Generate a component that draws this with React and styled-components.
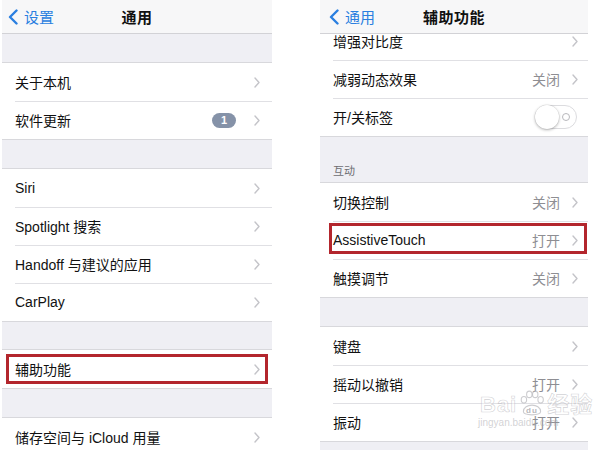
import React from 'react';
import styled, { createGlobalStyle } from 'styled-components';

const GlobalStyle = createGlobalStyle`
  html, body {
    margin: 0;
    padding: 0;
    background: #ffffff;
  }
  body {
    font-family: "Liberation Sans", "Noto Sans CJK SC", sans-serif;
  }
`

const Page = styled.div`
  position: relative;
  width: 600px;
  height: 450px;
  display: flex;
  gap: 48px;
  padding-left: 2px;
  box-sizing: border-box;
  overflow: hidden;
  background: #ffffff;
`

const Phone = styled.div`
  width: ${p => p.$width}px;
  height: 450px;
  display: flex;
  flex-direction: column;
  background: #efeff4;
  overflow: hidden;
`

const NavBar = styled.div`
  position: relative;
  z-index: 2;
  flex: 0 0 34px;
  height: 34px;
  display: flex;
  align-items: center;
  justify-content: center;
  background: #f7f7f8;
  border-bottom: 1px solid #d2d2d6;
  box-sizing: border-box;
`

const BackButton = styled.div`
  position: absolute;
  left: ${p => p.$left}px;
  top: 0;
  bottom: 0;
  display: flex;
  align-items: center;
  gap: 6px;
  color: #2a7fe0;
  font-size: 15px;
`

const Title = styled.div`
  font-size: 15px;
  font-weight: 600;
  color: #111;
  letter-spacing: 0.5px;
`

const Scroll = styled.div`
  flex: 1;
  overflow: hidden;
  display: flex;
  flex-direction: column;
`

const Spacer = styled.div`
  flex: 0 0 ${p => p.$h}px;
`

const SectionHeader = styled.div`
  flex: 0 0 ${p => p.$h}px;
  display: flex;
  align-items: flex-end;
  padding: 0 0 4px 13px;
  box-sizing: border-box;
  font-size: 11px;
  color: #6d6d72;
`

const Group = styled.div`
  flex: 0 0 auto;
  background: #ffffff;
  border-top: 1px solid #d8d8dc;
  border-bottom: 1px solid #d8d8dc;
  margin-top: ${p => p.$offset || 0}px;
`

const Row = styled.div`
  position: relative;
  height: 38px;
  display: flex;
  align-items: center;
  padding: 0 ${p => p.$pr}px 0 ${p => p.$pl}px;
  box-sizing: border-box;
  font-size: 14px;
  color: #111;

  & + &::before {
    content: '';
    position: absolute;
    top: 0;
    left: ${p => p.$pl}px;
    right: 0;
    border-top: 1px solid #e0e0e4;
  }
`

const Label = styled.span`
  flex: 1;
  white-space: nowrap;
`

const Value = styled.span`
  color: #8e8e93;
  font-size: 14px;
  margin-right: 12px;
`

const Badge = styled.span`
  width: 24px;
  height: 15px;
  border-radius: 8px;
  background: #8592a8;
  color: #ffffff;
  font-size: 11px;
  font-weight: 700;
  display: flex;
  align-items: center;
  justify-content: center;
  margin-right: 18px;
`

const Highlight = styled.div`
  position: absolute;
  top: ${p => p.$t}px;
  bottom: ${p => p.$b}px;
  left: ${p => p.$l}px;
  right: ${p => p.$r}px;
  border: 3px solid #b3262d;
  pointer-events: none;
`

const Switch = styled.div`
  position: relative;
  width: 42px;
  height: 24px;
  border-radius: 12px;
  border: 1px solid #dcdcdf;
  background: #ffffff;
  box-sizing: border-box;
  margin-right: 1px;
`

const Knob = styled.div`
  position: absolute;
  left: -1px;
  top: -1px;
  width: 24px;
  height: 24px;
  border-radius: 50%;
  background: #ffffff;
  box-shadow: 0 1px 3px rgba(0, 0, 0, 0.3), 0 0 0 0.5px rgba(0, 0, 0, 0.08);
`

const OffRing = styled.div`
  position: absolute;
  right: 6px;
  top: 7px;
  width: 6px;
  height: 6px;
  border-radius: 50%;
  border: 1.5px solid #b8b8bc;
`

const Watermark = styled.div`
  position: absolute;
  left: 480px;
  top: 386px;
  display: flex;
  flex-direction: column;
  align-items: flex-start;
  pointer-events: none;
`

const MarkLine = styled.div`
  display: flex;
  align-items: flex-end;
  gap: 2px;
  font-size: 22px;
  font-weight: 700;
  letter-spacing: 1px;
  -webkit-text-stroke: 0.6px rgba(170, 170, 175, 0.55);
  color: rgba(255, 255, 255, 0.4);
`

const MarkUrl = styled.div`
  font-size: 10px;
  margin-left: -2px;
  margin-top: -1px;
  color: rgba(165, 165, 170, 0.5);
`

const Chevron = () => (
  <svg width="6" height="11" viewBox="0 0 6 11">
    <path d="M1 1 L5 5.5 L1 10" fill="none" stroke="#c4c4c9" strokeWidth="1.4" strokeLinecap="round" strokeLinejoin="round" />
  </svg>
)

const BackChevron = () => (
  <svg width="10" height="16" viewBox="0 0 10 16">
    <path d="M8.5 1.5 L2 8 L8.5 14.5" fill="none" stroke="#2a7fe0" strokeWidth="2.4" strokeLinecap="round" strokeLinejoin="round" />
  </svg>
)

const Paw = () => (
  <svg width="26" height="28" viewBox="0 0 24 26" style={{ marginBottom: 1 }}>
    <g fill="rgba(255,255,255,0.4)" stroke="rgba(170,170,175,0.6)" strokeWidth="1">
      <ellipse cx="4.5" cy="10" rx="2.5" ry="3" />
      <ellipse cx="9.5" cy="5" rx="2.5" ry="3" />
      <ellipse cx="15" cy="5" rx="2.5" ry="3" />
      <ellipse cx="20" cy="10" rx="2.5" ry="3" />
      <path d="M4 21 C4 13 20 13 20 21 C20 25 4 25 4 21 Z" />
    </g>
    <text x="12" y="22.5" fontSize="7.5" textAnchor="middle" fill="rgba(165,165,170,0.8)" stroke="none" fontFamily="Liberation Sans">du</text>
  </svg>
)

const Item = ({ label, value, badge, toggle, highlight, pl, pr }) => (
  <Row $pl={pl} $pr={pr}>
    <Label>{label}</Label>
    {badge && <Badge>{badge}</Badge>}
    {value && <Value>{value}</Value>}
    {toggle ? (
      <Switch>
        <Knob />
        <OffRing />
      </Switch>
    ) : (
      <Chevron />
    )}
    {highlight && <Highlight {...highlight} />}
  </Row>
)

const left = { pl: 13, pr: 12 }
const right = { pl: 13, pr: 10 }

export default function App() {
  return (
    <>
      <GlobalStyle />
      <Page>
        <Phone $width={270}>
          <NavBar>
            <BackButton $left={6}>
              <BackChevron />
              <span>设置</span>
            </BackButton>
            <Title>通用</Title>
          </NavBar>
          <Scroll>
            <Spacer $h={28} />
            <Group>
              <Item {...left} label="关于本机" />
              <Item {...left} label="软件更新" badge="1" />
            </Group>
            <Spacer $h={28} />
            <Group>
              <Item {...left} label="Siri" />
              <Item {...left} label="Spotlight 搜索" />
              <Item {...left} label="Handoff 与建议的应用" />
              <Item {...left} label="CarPlay" />
            </Group>
            <Spacer $h={27} />
            <Group>
              <Item {...left} label="辅助功能" highlight={{ $t: 4, $b: 4, $l: 4, $r: 4 }} />
            </Group>
            <Spacer $h={28} />
            <Group>
              <Item {...left} label="储存空间与 iCloud 用量" />
            </Group>
          </Scroll>
        </Phone>
        <Phone $width={268}>
          <NavBar>
            <BackButton $left={9}>
              <BackChevron />
              <span>通用</span>
            </BackButton>
            <Title>辅助功能</Title>
          </NavBar>
          <Scroll>
            <Group $offset={-13}>
              <Item {...right} label="增强对比度" />
              <Item {...right} label="减弱动态效果" value="关闭" />
              <Item {...right} label="开/关标签" toggle />
            </Group>
            <SectionHeader $h={45}>互动</SectionHeader>
            <Group>
              <Item {...right} label="切换控制" value="关闭" />
              <Item {...right} label="AssistiveTouch" value="打开" highlight={{ $t: 2, $b: 5, $l: 9, $r: 1 }} />
              <Item {...right} label="触摸调节" value="关闭" />
            </Group>
            <Spacer $h={28} />
            <Group>
              <Item {...right} label="键盘" />
              <Item {...right} label="摇动以撤销" value="打开" />
              <Item {...right} label="振动" value="打开" />
            </Group>
          </Scroll>
        </Phone>
        <Watermark>
          <MarkLine>
            <span>Bai</span>
            <Paw />
            <span>经验</span>
          </MarkLine>
          <MarkUrl>jingyan.baidu.com</MarkUrl>
        </Watermark>
      </Page>
    </>
  )
}
